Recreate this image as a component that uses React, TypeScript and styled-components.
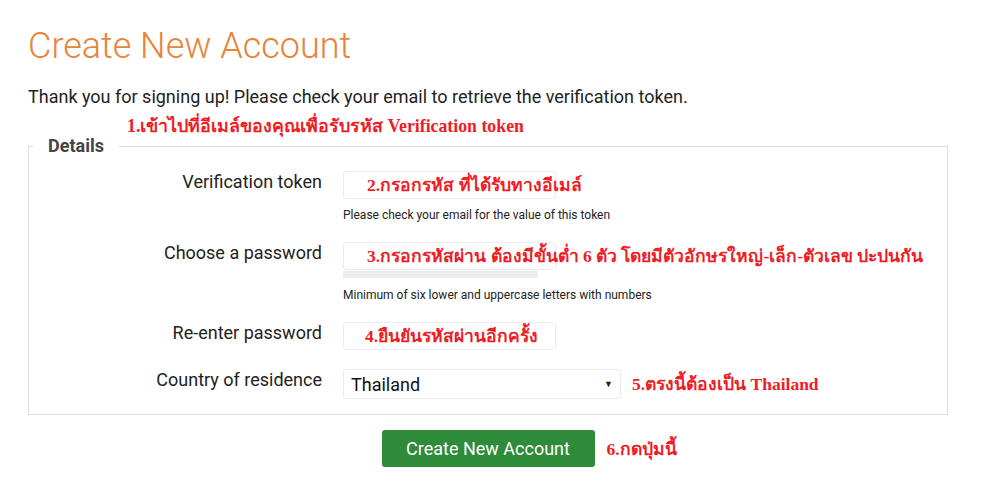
import React from "react";
import styled, { createGlobalStyle } from "styled-components";

const Global = createGlobalStyle`
  body {
    margin: 0;
    background: #ffffff;
    font-family: Roboto, "Liberation Sans", Arial, sans-serif;
    color: #222222;
  }
`;

const Page = styled.div`
  width: 920px;
  padding-left: 28px;
`;

const Title = styled.h1`
  margin: 26px 0 0;
  font-size: 36px;
  line-height: 40px;
  font-weight: 300;
  color: #e8843a;
`;

const Intro = styled.p`
  margin: 19px 0 0;
  font-size: 18px;
  line-height: 24px;
  color: #222;
`;

const Note = styled.span<{ $size?: number }>`
  font-family: "Liberation Serif", "Times New Roman", serif;
  font-weight: 700;
  font-size: ${(p) => p.$size ?? 17.5}px;
  line-height: 22px;
  color: #ee1c25;
  white-space: nowrap;
`;

const TopNote = styled(Note)`
  display: block;
  margin: 6px 0 0 99px;
`;

const OverNote = styled(Note)<{ $left: number }>`
  position: absolute;
  left: ${(p) => p.$left}px;
  top: 50%;
  transform: translateY(-50%);
  pointer-events: none;
`;

const Fieldset = styled.fieldset`
  margin: -1px 0 0;
  padding: 15px 0 15px;
  border: 1px solid #dcdcdc;
  border-radius: 0;
  display: flex;
  flex-direction: column;
  gap: 19px;
`;

const Legend = styled.legend`
  margin-left: 4px;
  padding: 0 15px;
  font-size: 18px;
  line-height: 20px;
  font-weight: 700;
  color: #444;
`;

const Row = styled.div`
  display: grid;
  grid-template-columns: 293px 1fr;
  column-gap: 21px;
  align-items: start;
`;

const Label = styled.label`
  text-align: right;
  font-size: 18px;
  line-height: 22px;
  color: #222;
`;

const Field = styled.div`
  display: flex;
  flex-direction: column;
  align-items: flex-start;
`;

const InputWrap = styled.div`
  position: relative;
`;

const Input = styled.input`
  box-sizing: border-box;
  width: 213px;
  height: 28px;
  border: 1px solid #ececec;
  border-radius: 3px;
  background: #fff;
  font: inherit;
  padding: 0 8px;
  outline: none;
`;

const Strength = styled.div`
  width: 195px;
  height: 7px;
  margin-top: 1px;
  background: #ededed;
`;

const Help = styled.div<{ $gap: number }>`
  margin-top: ${(p) => p.$gap}px;
  font-size: 12px;
  line-height: 16px;
  color: #222;
`;

const SelectRow = styled.div`
  display: flex;
  align-items: center;
  gap: 11px;
`;

const SelectBox = styled.div`
  position: relative;
`;

const Select = styled.select`
  box-sizing: border-box;
  width: 278px;
  height: 30px;
  border: 1px solid #ececec;
  border-radius: 3px;
  background: #fff;
  appearance: none;
  -webkit-appearance: none;
  font-family: Roboto, "Liberation Sans", Arial, sans-serif;
  font-size: 18px;
  color: #111;
  padding: 0 7px;
  outline: none;
`;

const Arrow = styled.span`
  position: absolute;
  right: 8px;
  top: 50%;
  transform: translateY(-50%);
  font-size: 9px;
  color: #222;
  pointer-events: none;
`;

const ButtonRow = styled.div`
  display: flex;
  justify-content: center;
  margin-top: 15px;
`;

const ButtonWrap = styled.div`
  position: relative;
`;

const Button = styled.button`
  width: 213px;
  height: 37px;
  border: none;
  border-radius: 3px;
  background: #2e8b39;
  color: #fff;
  font-family: Roboto, "Liberation Sans", Arial, sans-serif;
  font-size: 18px;
  cursor: pointer;
`;

const SideNote = styled(Note)`
  position: absolute;
  left: calc(100% + 12px);
  top: 50%;
  transform: translateY(-50%);
`;

export default function App() {
  return (
    <>
      <Global />
      <Page>
        <Title>Create New Account</Title>
        <Intro>
          Thank you for signing up! Please check your email to retrieve the verification token.
        </Intro>
        <TopNote $size={17.8}>1.เข้าไปที่อีเมล์ของคุณเพื่อรับรหัส Verification token</TopNote>
        <Fieldset>
          <Legend>Details</Legend>
          <Row>
            <Label>Verification token</Label>
            <Field>
              <InputWrap>
                <Input type="text" />
                <OverNote $left={24}>2.กรอกรหัส ที่ได้รับทางอีเมล์</OverNote>
              </InputWrap>
              <Help $gap={8}>Please check your email for the value of this token</Help>
            </Field>
          </Row>
          <Row>
            <Label>Choose a password</Label>
            <Field>
              <InputWrap>
                <Input type="password" />
                <OverNote $left={24}>
                  3.กรอกรหัสผ่าน ต้องมีขั้นต่ำ 6 ตัว โดยมีตัวอักษรใหญ่-เล็ก-ตัวเลข ปะปนกัน
                </OverNote>
              </InputWrap>
              <Strength />
              <Help $gap={9}>Minimum of six lower and uppercase letters with numbers</Help>
            </Field>
          </Row>
          <Row>
            <Label>Re-enter password</Label>
            <Field>
              <InputWrap>
                <Input type="password" />
                <OverNote $left={22}>4.ยืนยันรหัสผ่านอีกครั้ง</OverNote>
              </InputWrap>
            </Field>
          </Row>
          <Row>
            <Label>Country of residence</Label>
            <SelectRow>
              <SelectBox>
                <Select defaultValue="TH">
                  <option value="TH">Thailand</option>
                </Select>
                <Arrow>▼</Arrow>
              </SelectBox>
              <Note>5.ตรงนี้ต้องเป็น Thailand</Note>
            </SelectRow>
          </Row>
        </Fieldset>
        <ButtonRow>
          <ButtonWrap>
            <Button>Create New Account</Button>
            <SideNote>6.กดปุ่มนี้</SideNote>
          </ButtonWrap>
        </ButtonRow>
      </Page>
    </>
  );
}
